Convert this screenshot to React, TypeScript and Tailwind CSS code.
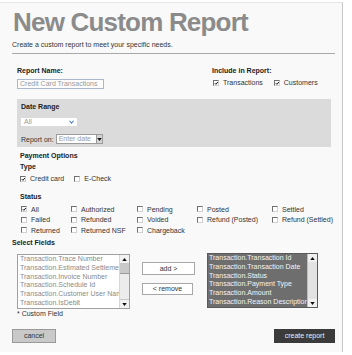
import React from "react";

function Box({ checked }: { checked?: boolean }) {
  return (
    <span className="relative inline-block w-[6px] h-[6px] shrink-0 bg-white border-t border-l border-[#6f6f6f] border-b border-r border-b-[#d0d0d0] border-r-[#d0d0d0]">
      {checked && (
        <svg viewBox="0 0 6 6" className="absolute left-0 top-0 w-[5px] h-[5px]">
          <path d="M1 2.6 L2.3 4 L4.6 1.2" fill="none" stroke="#111" strokeWidth="1.2" />
        </svg>
      )}
    </span>
  );
}

function Check({ label, checked }: { label: string; checked?: boolean }) {
  return (
    <span className="flex items-center gap-[4px] whitespace-nowrap">
      <Box checked={checked} />
      <span>{label}</span>
    </span>
  );
}

function Arrow({ up }: { up?: boolean }) {
  return (
    <svg viewBox="0 0 6 4" className="w-[5px] h-[3px]">
      <polygon points={up ? "0,4 3,0 6,4" : "0,0 6,0 3,4"} fill="#111" />
    </svg>
  );
}

const LEFT = [
  "Transaction.Trace Number",
  "Transaction.Estimated Settlement Date",
  "Transaction.Invoice Number",
  "Transaction.Schedule Id",
  "Transaction.Customer User Name",
  "Transaction.IsDebit",
];

const RIGHT = [
  "Transaction.Transaction Id",
  "Transaction.Transaction Date",
  "Transaction.Status",
  "Transaction.Payment Type",
  "Transaction.Amount",
  "Transaction.Reason Description",
];

const STATUS = [
  ["All", "Authorized", "Pending", "Posted", "Settled"],
  ["Failed", "Refunded", "Voided", "Refund (Posted)", "Refund (Settled)"],
  ["Returned", "Returned NSF", "Chargeback"],
];

export default function App() {
  return (
    <div className="w-[352px] h-[355px] bg-white overflow-hidden font-['Liberation_Sans',Arial,sans-serif] text-[7px] leading-[9px] text-[#333]">
      <div className="mt-[2px] w-[343px] h-[350px] bg-[#f9f9f9] border-t border-[#e6e6e6] border-r border-r-[#c6c6c6]">
        <h1 className="mt-[6px] pl-[13px] text-[26px] leading-[26px] font-bold tracking-[-0.8px] text-[#8b8b8b]">
          New Custom Report
        </h1>
        <p className="mt-[5px] pl-[12px]">Create a custom report to meet your specific needs.</p>
        <div className="mt-[4px] ml-[12px] w-[323px] border-t border-[#a8a8a8]" />

        {/* Name + include */}
        <div className="mt-[12px] flex">
          <div className="pl-[17px] w-[212px]">
            <div className="font-bold text-[#222]">Report Name:</div>
            <div className="mt-[4px] w-[87px] h-[10px] border border-[#a9b8cc] bg-[#fcfcfc] px-[2px] leading-[8px] text-[#9a9a9a]">
              Credit Card Transactions
            </div>
          </div>
          <div>
            <div className="font-bold text-[#222]">Include in Report:</div>
            <div className="mt-[3px] h-[9px] flex items-center gap-[11px] pl-[1px]">
              <Check label="Transactions" checked />
              <Check label="Customers" checked />
            </div>
          </div>
        </div>

        {/* Date range */}
        <div className="mt-[10px] ml-[17px] w-[314px] bg-[#dbdbdb] pl-[4px] pt-[3px] pb-[3px]">
          <div className="font-bold text-[#222]">Date Range</div>
          <div className="mt-[7px] w-[56px] h-[8px] bg-white flex items-center justify-between pl-[3px] pr-[3px] text-[#9a9a9a] leading-[8px]">
            <span>All</span>
            <svg viewBox="0 0 6 4" className="w-[5px] h-[4px]">
              <path d="M0.5 0.5 L3 3.3 L5.5 0.5" fill="none" stroke="#4f7fd6" strokeWidth="1.3" />
            </svg>
          </div>
          <div className="mt-[8px] h-[10px] flex items-center">
            <span>Report on:</span>
            <div className="ml-[2px] w-[47px] h-[10px] border border-[#9c9c9c] bg-white flex items-center justify-between pl-[2px] text-[#9a9a9a] leading-[8px]">
              <span>Enter date</span>
              <span className="w-[6px] h-[8px] bg-[#d4d4d4] border-l border-[#999] flex items-center justify-center">
                <Arrow />
              </span>
            </div>
          </div>
        </div>

        {/* Payment options */}
        <div className="mt-[4px] pl-[20px] font-bold text-[#222]">Payment Options</div>
        <div className="mt-[2px] pl-[20px] font-bold text-[#222]">Type</div>
        <div className="mt-[3px] h-[9px] pl-[20px] flex items-center gap-[10px]">
          <Check label="Credit card" checked />
          <Check label="E-Check" />
        </div>
        <div className="mt-[9px] pl-[20px] font-bold text-[#222]">Status</div>
        <div className="mt-[3px] pl-[21px] grid grid-cols-[50px_66px_60px_75px_auto]">
          {STATUS.flatMap((row, r) =>
            row.map((s, c) => (
              <div key={`${r}-${c}`} className="h-[10.5px] flex items-center">
                <Check label={s} checked={s === "All"} />
              </div>
            ))
          )}
        </div>

        {/* Select fields */}
        <div className="mt-[2.5px] pl-[12px] font-bold text-[#222]">Select Fields</div>
        <div className="mt-[7px] flex items-start">
          <div className="ml-[17px] w-[113px] h-[55px] border border-[#a0a0a0] bg-white flex">
            <div className="flex-1 overflow-hidden pl-[2px] leading-[8.8px] text-[#8a8a8a]">
              {LEFT.map((t) => (
                <div key={t} className="whitespace-nowrap">{t}</div>
              ))}
            </div>
            <div className="w-[10px] flex flex-col bg-[#ececec] border-l border-[#d6d6d6]">
              <div className="h-[9px] bg-[#f2f2f2] border-b border-[#c8c8c8] flex items-center justify-center">
                <Arrow up />
              </div>
              <div className="h-[10px] bg-[#c9c9c9] border-b border-[#9c9c9c]" />
              <div className="flex-1" />
              <div className="h-[9px] bg-[#f2f2f2] border-t border-[#c8c8c8] flex items-center justify-center">
                <Arrow />
              </div>
            </div>
          </div>

          <div className="ml-[12px] flex flex-col">
            <button className="mt-[8px] w-[53px] h-[13px] border border-[#a8a8a8] bg-white text-[7px] leading-[11px] text-[#333]">
              add &gt;
            </button>
            <button className="mt-[8px] w-[51px] h-[12px] border border-[#a8a8a8] bg-white text-[7px] leading-[10px] text-[#333]">
              &lt; remove
            </button>
          </div>

          <div className="-mt-px ml-[12px] w-[111px] h-[55px] border border-[#5a5a5a] bg-[#6e6e6e] flex">
            <div className="flex-1 overflow-hidden pl-[1px] leading-[8.8px] text-[#f4f4f4]">
              {RIGHT.map((t) => (
                <div key={t} className="whitespace-nowrap">{t}</div>
              ))}
            </div>
            <div className="w-[10px] flex flex-col bg-[#e2e2e2] border-l border-[#bdbdbd]">
              <div className="h-[8px] bg-[#f0f0f0] flex items-center justify-center">
                <Arrow up />
              </div>
              <div className="flex-1" />
              <div className="h-[8px] bg-[#f0f0f0] flex items-center justify-center">
                <Arrow />
              </div>
            </div>
          </div>
        </div>
        <div className="pl-[17px]">* Custom Field</div>

        {/* Actions */}
        <div className="mt-[11px] pl-[12px] pr-[7px] flex justify-between">
          <button className="w-[44px] h-[14px] bg-[#c9c9c9] border border-[#9a9a9a] text-[7px] leading-[12px] text-[#333]">
            cancel
          </button>
          <button className="w-[61px] h-[14px] bg-[#3b3b3b] text-[7px] leading-[14px] text-[#eee]">
            create report
          </button>
        </div>
      </div>
    </div>
  );
}
